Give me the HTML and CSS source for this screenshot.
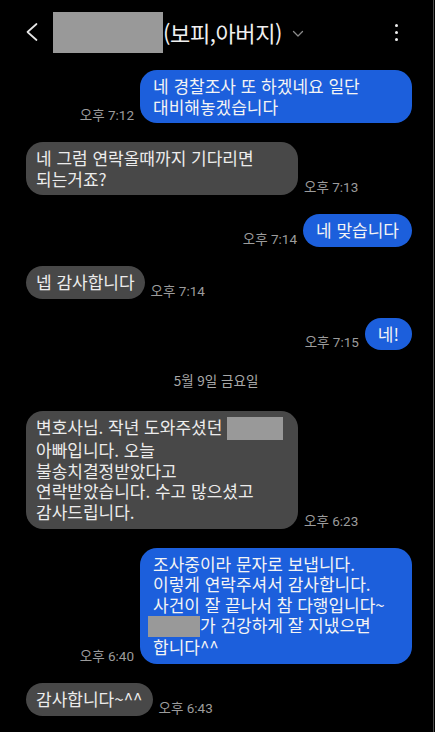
FILE: index.html
```html
<!DOCTYPE html>
<html lang="ko">
<head>
    <meta charset="UTF-8">
    <meta name="viewport" content="width=device-width, initial-scale=1.0">
    <title>메시지</title>
    <link rel="stylesheet" href="styles.css">
</head>
<body>

<div class="screen">
    <!-- 상단 바 -->
    <header class="topbar">
        <svg class="back" width="14" height="20" viewBox="0 0 14 20">
            <polyline points="11.5,2 2.5,10 11.5,18" fill="none" stroke="#e6e6e6" stroke-width="1.7" stroke-linecap="round" stroke-linejoin="round"/>
        </svg>
        <div class="title">
            <span class="redact name-redact"></span>
            <span class="title-text">(보피,아버지)</span>
            <svg class="caret" width="12" height="8" viewBox="0 0 12 8">
                <polyline points="1.5,1.5 6,6 10.5,1.5" fill="none" stroke="#8a8a8a" stroke-width="1.3" stroke-linecap="round" stroke-linejoin="round"/>
            </svg>
        </div>
        <div class="kebab">
            <span></span><span></span><span></span>
        </div>
    </header>

    <!-- 메시지 목록 -->
    <main class="messages">
        <div class="row sent">
            <span class="time">오후 7:12</span>
            <div class="bubble wide">네 경찰조사 또 하겠네요 일단<br>대비해놓겠습니다</div>
        </div>

        <div class="row received">
            <div class="bubble wide">네 그럼 연락올때까지 기다리면<br>되는거죠?</div>
            <span class="time">오후 7:13</span>
        </div>

        <div class="row sent">
            <span class="time">오후 7:14</span>
            <div class="bubble">네 맞습니다</div>
        </div>

        <div class="row received">
            <div class="bubble">넵 감사합니다</div>
            <span class="time">오후 7:14</span>
        </div>

        <div class="row sent">
            <span class="time">오후 7:15</span>
            <div class="bubble">네!</div>
        </div>

        <div class="date">5월 9일 금요일</div>

        <div class="row received">
            <div class="bubble wide">변호사님. 작년 도와주셨던 <span class="redact inline-redact"></span><br>아빠입니다. 오늘<br>불송치결정받았다고<br>연락받았습니다. 수고 많으셨고<br>감사드립니다.</div>
            <span class="time">오후 6:23</span>
        </div>

        <div class="row sent">
            <span class="time">오후 6:40</span>
            <div class="bubble wide">조사중이라 문자로 보냅니다.<br>이렇게 연락주셔서 감사합니다.<br>사건이 잘 끝나서 참 다행입니다~<br><span class="redact kid-redact"></span>가 건강하게 잘 지냈으면<br>합니다^^</div>
        </div>

        <div class="row received">
            <div class="bubble">감사합니다~^^</div>
            <span class="time">오후 6:43</span>
        </div>
    </main>
</div>

</body>
</html>
```

FILE: styles.css
```css
body {
    margin: 0;
    background: #000;
    font-family: "Noto Sans CJK KR", "Noto Sans", sans-serif;
    color: #f2f2f2;
}
.screen {
    width: 434px;
    height: 732px;
    box-sizing: border-box;
    border-right: 1px solid #4a4a4a;
    overflow: hidden;
}

/* 상단 바 */
.topbar {
    height: 64px;
    display: flex;
    align-items: center;
    padding: 0 0 0 25px;
}
.back {
    margin-top: -1px;
}
.title {
    display: flex;
    align-items: center;
    margin-left: 14px;
}
.redact {
    background: #999;
    display: inline-block;
}
.name-redact {
    width: 110px;
    height: 41px;
    margin-top: 1px;
}
.title-text {
    font-size: 22px;
    line-height: 28px;
    color: #f0f0f0;
    letter-spacing: -0.4px;
}
.caret {
    margin-left: 10px;
    margin-top: 3px;
}
.kebab {
    margin-left: auto;
    margin-right: 35px;
    display: flex;
    flex-direction: column;
    gap: 4px;
}
.kebab span {
    width: 3px;
    height: 3px;
    border-radius: 50%;
    background: #eee;
}

/* 메시지 */
.messages {
    display: flex;
    flex-direction: column;
    gap: 19px;
    padding: 6px 21px 0 26px;
}
.row {
    display: flex;
    align-items: flex-end;
    gap: 6px;
}
.sent {
    justify-content: flex-end;
}
.bubble {
    font-size: 17px;
    line-height: 20.6px;
    padding: 6px 12px;
    border-radius: 17px;
    white-space: nowrap;
}
.sent .bubble {
    background: #1c5fdc;
    color: #f4f4f4;
    padding: 6px 13px;
}
.received .bubble {
    background: #484848;
    color: #ececec;
    padding: 6px 10px;
}
.bubble.wide {
    width: 272px;
    box-sizing: border-box;
}
.time {
    font-family: Roboto, "Noto Sans CJK KR", sans-serif;
    font-size: 13.5px;
    line-height: 16px;
    color: #9c9c9c;
    white-space: nowrap;
}
.date {
    height: 23px;
    line-height: 23px;
    text-align: center;
    font-size: 13.5px;
    color: #a8a8a8;
    padding-right: 6px;
}
.inline-redact {
    width: 56px;
    height: 23px;
    vertical-align: -6px;
}
.kid-redact {
    width: 52px;
    height: 21px;
    margin-left: -5px;
    vertical-align: -5px;
}
```
